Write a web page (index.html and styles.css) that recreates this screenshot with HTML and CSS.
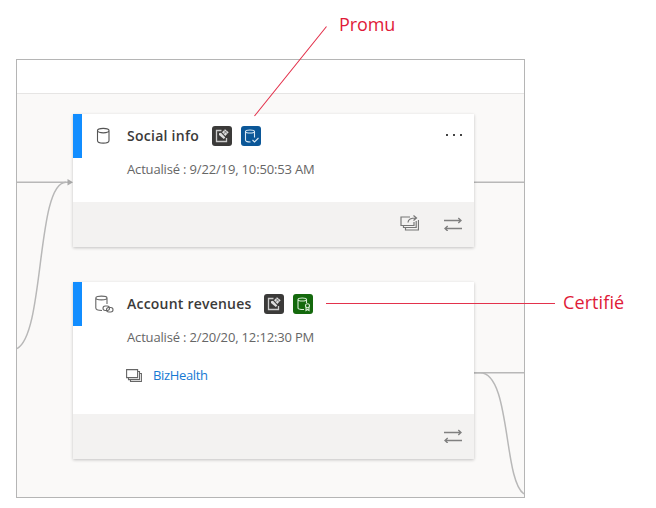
FILE: index.html
```html
<!DOCTYPE html>
<html lang="fr">
<head>
<meta charset="utf-8">
<title>Promu / Certifié</title>
<link rel="stylesheet" href="styles.css">
</head>
<body>
<svg class="defs" width="0" height="0" aria-hidden="true">
  <symbol id="edit" viewBox="0 0 20 20">
    <path d="M9.500 4.500H4.500V15.500H14.500V12" fill="none" stroke="#ccc" stroke-width="1.300"/>
    <path d="M7 7.300 9 6.700l4.300 4.800-1.500 1.500L7 9z" fill="#ddd"/>
    <path d="M10 6.300 13 3.300l3.700 3-3.400 3.600z" fill="#ddd"/>
    <path d="m12 4.500 3.500 3.300M14.800 4.400l-3.300 3.800" stroke="#555" stroke-width=".7"/>
  </symbol>
  <symbol id="swap" viewBox="0 0 18 14">
    <path d="M0 3.500h17M14.300 1l2.700 2.500L14.300 6M18 11.500H1M3.700 9 1 11.500l2.700 2.500" fill="none" stroke="#808080" stroke-width="1.400"/>
  </symbol>
</svg>
<main class="stage">
  <section class="panel">
    <header class="bar"></header>
    <div class="canvas">
      <svg class="links" width="507" height="403" viewBox="17 94 507 403">
        <g fill="none" stroke="#b8b8b8" stroke-width="1.500">
          <path d="M17 182.200H70M474 182.200H524M474 372.800H524"/>
          <path d="M17 348.500C45 334 36 182.200 66 182.200"/>
          <path d="M474 372.800H480C511 372.800 503 480 524 494"/>
        </g>
        <path d="M67.500 179 73 182.200 67.500 185.400z" fill="#aaa"/>
      </svg>
      <article class="card social">
        <div class="body">
          <div class="head">
            <svg class="db" width="20" height="20" viewBox="0 0 20 20" fill="none" stroke="#555" stroke-width="1.100"><path d="M2.500 4.600V14.500C2.500 18 14 18 14 14.500V4.600M2.500 4.600C2.500 1.600 14 1.600 14 4.600S2.500 7.600 2.500 4.600z"/></svg>
            <h2 class="title social-title">Social info</h2>
            <span class="badge dark"><svg width="20" height="20"><use href="#edit"/></svg></span>
            <span class="badge blue"><svg width="20" height="20" viewBox="0 0 20 20" fill="none" stroke="#dceaf5" stroke-width="1.100"><path d="M4.500 5.500V14C4.500 15.500 7 16 9.500 16M13.500 5.500V11.500M4.500 5.500C4.500 3.500 13.500 3.500 13.500 5.500S4.500 7.500 4.500 5.500zM11.500 14l2 2 4-4"/></svg></span>
            <span class="more"><i></i><i></i><i></i></span>
          </div>
          <p class="date">Actualisé : 9/22/19, 10:50:53 AM</p>
        </div>
        <footer class="foot">
          <svg width="19" height="17" viewBox="0 0 19 17" fill="none" stroke="#777" stroke-width="1.200"><path d="M10 2H1v8.500h13V7M3.500 10.500v2h12.700V6M5.500 13v2h13V5M8 7.500C8 4 11 3 16 3M13.500.500 16.500 3l-3 2.500"/></svg>
          <svg width="18" height="14"><use href="#swap"/></svg>
        </footer>
      </article>
      <article class="card account">
        <div class="body">
          <div class="head">
            <svg class="db" width="20" height="20" viewBox="0 0 20 20" fill="none" stroke="#666" stroke-width="1.100"><path d="M.800 4V14C.800 15.600 4 16.500 7 16.500M12 4V10M.800 4C.800 1.500 12 1.500 12 4S.800 6.500 .800 4z"/><rect x="8" y="12" width="6.500" height="4.500" rx="2.200"/><rect x="11.500" y="13.500" width="6.500" height="4.500" rx="2.200"/></svg>
            <h2 class="title account-title">Account revenues</h2>
            <span class="badge dark"><svg width="20" height="20"><use href="#edit"/></svg></span>
            <span class="badge green"><svg width="20" height="20" viewBox="0 0 20 20" fill="none" stroke="#d8edd5" stroke-width="1.100"><path d="M5 5.500V14C5 15 7 15.500 11 15.500M13.500 5.500V9M5 5.500C5 3.500 13.500 3.500 13.500 5.500S5 7.500 5 5.500zM13 13.500v3l1.500-1 1.500 1v-3"/><circle cx="14.500" cy="11.700" r="2"/></svg></span>
          </div>
          <p class="date">Actualisé : 2/20/20, 12:12:30 PM</p>
          <p class="source">
            <svg width="16" height="13" viewBox="0 0 16 13" fill="none" stroke="#666" stroke-width="1.100"><path d="M.600.600h11v8H.600zM2.500 8.600v2h11V2.500h-2M4.500 10.600v2h10.900V4.500h-2"/></svg>
            <a class="link">BizHealth</a>
          </p>
        </div>
        <footer class="foot"><svg width="18" height="14"><use href="#swap"/></svg></footer>
      </article>
    </div>
  </section>
  <svg class="callouts" width="656" height="508" viewBox="0 0 656 508" fill="none" stroke="#e3324c" stroke-width="1.100"><path d="M326.500 26.500 254.500 116M326 303.500H555"/></svg>
  <span class="label promoted">Promu</span>
  <span class="label certified">Certifié</span>
</main>
</body>
</html>
```
FILE: styles.css
```css
* { box-sizing: border-box; }
body { margin: 0; background: #fff; font-family: "Open Sans", "Noto Sans", sans-serif; }
h2, p { margin: 0; }
svg { display: block; flex: none; }
.defs { position: absolute; }
.stage { position: relative; width: 656px; height: 508px; padding: 59px 0 0 16px; overflow: hidden; }
.panel { width: 509px; height: 439px; border: 1px solid #b5b5b5; }
.bar { height: 34px; background: #fff; border-bottom: 1px solid #e6e5e4; }
.canvas { position: relative; height: 403px; background: #faf9f8; overflow: hidden; }
.links { position: absolute; left: 0; top: 0; }
.card { position: absolute; left: 56px; width: 401px; display: flex; flex-direction: column; background: #fff; box-shadow: 0 1px 3px rgba(0,0,0,.22); }
.card::before { content: ""; position: absolute; left: 0; top: 0; width: 9px; height: 44px; background: #118dff; }
.social { top: 20px; height: 133px; }
.account { top: 188px; height: 177px; }
.body { flex: 1; padding: 11px 12px 0 22px; }
.head { display: flex; align-items: center; height: 22px; }
.db { margin-right: 12px; }
.title { color: #3b3a39; font-size: 14px; font-weight: 600; line-height: 22px; white-space: nowrap; }
.social-title { width: 85px; letter-spacing: .26px; }
.account-title { width: 137px; letter-spacing: .22px; }
.badge { width: 20px; height: 20px; margin-right: 9px; border-radius: 3px; }
.dark { background: #3b3a39; }
.blue { background: #0b5798; }
.green { background: #14690d; }
.more { display: flex; gap: 5px; margin: -3px 0 0 auto; }
.more i { width: 2px; height: 2px; background: #444; }
.date { margin: 12px 0 0 32px; color: #666; font-size: 13px; line-height: 20px; letter-spacing: -.16px; white-space: nowrap; }
.source { display: flex; align-items: center; height: 20px; margin: 18px 0 0 31px; gap: 11px; }
.link { color: #1579d3; font-size: 13px; line-height: 20px; letter-spacing: -.35px; }
.foot { display: flex; justify-content: flex-end; align-items: center; gap: 25px; height: 45px; padding: 0 12px 2px 0; background: #f3f2f1; }
.callouts { position: absolute; left: 0; top: 0; }
.label { position: absolute; color: #e01a38; font-size: 18px; line-height: 24px; white-space: nowrap; }
.promoted { left: 339px; top: 12px; letter-spacing: -.1px; }
.certified { left: 563px; top: 290px; letter-spacing: .1px; }
```
